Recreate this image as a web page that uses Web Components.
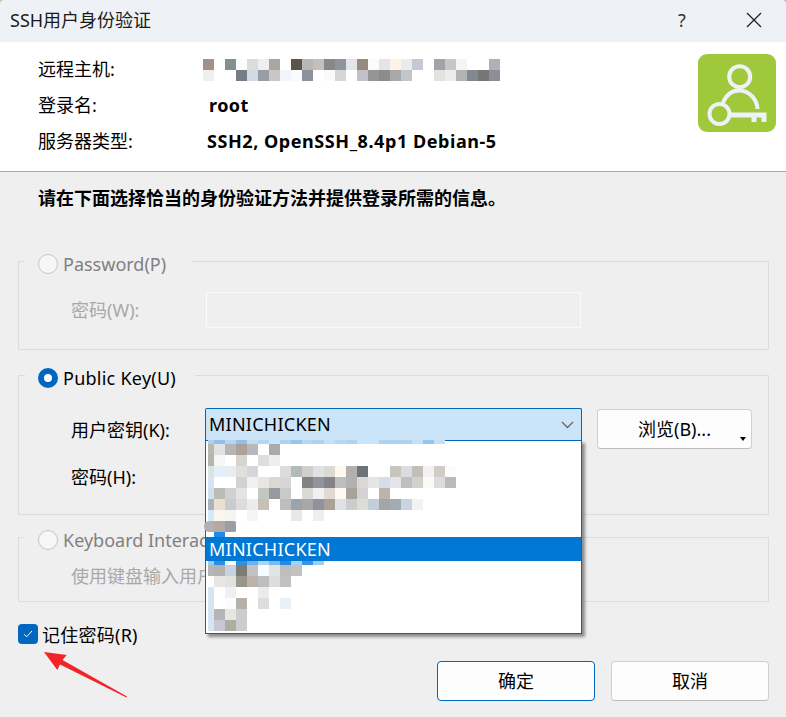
<!DOCTYPE html>
<html lang="zh">
<head>
<meta charset="utf-8">
<title>SSH用户身份验证</title>
<style>
  html, body { margin: 0; padding: 0; background: #efefef; }
  body {
    width: 786px;
    height: 717px;
    overflow: hidden;
    font: 18px/24px "Noto Sans", "Noto Sans CJK SC", sans-serif;
    color: #000;
  }
  b { letter-spacing: .45px; }
</style>
</head>
<body>
<ssh-dialog>
  <title-bar slot="title">SSH用户身份验证</title-bar>
  <info-header slot="header">
    <info-row label="远程主机:">
      <mosaic-grid cell="11" first="11" rows="#a09288,,#848f8f,#fcfcfc,#dcdcdc,#eeeeee,#aba59f,,#5c534b,#b9b6b3,#c4bfba,#888888,#8f939b,#e3e5e8,#948a80,#fafbfc,#e4e5e8,#fdf3e8,#ebebeb,#c5c9d4,,#a0a4a8,#c6c8c8,#f5f5f5,,,#b0b1b8;#efefef,,,#757c86,#d3dae3,#9a9ca6,#c9c6c4,#f3f6f8,#fafbfc,#8c929c,,#fafafa,#d6d6d6,,#c0c1c9,#959595,#8b8c8e,#a8a8a8,#c0c6cc,,,#e2e2e0,#ececee,#b2b4b2,#808890,#767676,#8c9094" style="margin:2px 0 0 -6px"></mosaic-grid>
    </info-row>
    <info-row label="登录名:"><b>root</b></info-row>
    <info-row label="服务器类型:"><b style="margin-left:-2px;letter-spacing:.56px">SSH2, OpenSSH_8.4p1 Debian-5</b></info-row>
  </info-header>
  <prompt-line slot="body">请在下面选择恰当的身份验证方法并提供登录所需的信息。</prompt-line>

  <group-box slot="body" style="--gap-end:26px">
    <radio-option slot="legend" disabled>Password(P)</radio-option>
    <form-row label="密码(W):" disabled style="--row-top:18px;--row-bottom:21px"><text-field></text-field></form-row>
  </group-box>

  <group-box slot="body" style="--gap-end:19px;margin-top:13px">
    <radio-option slot="legend" checked style="letter-spacing:.25px">Public Key(U)</radio-option>
    <form-row label="用户密钥(K):" style="--row-top:20px;--row-h:44px;--label-h:44px">
      <combo-box value="MINICHICKEN">
        <mosaic-grid cell="4" first="6" rows="#b0cfe8,#8fc0ea,#b5d5f0,#8fc0ea,#c5dcec,#b5d5f0,#cce4f7,#aed3f0,#93c5ee,#b8d6f0,#aed3f0,#c5e0f5,#b8d6f0,#aed3f0,#cce4f7,#cce4f7,#aed3f0,#aed3f0,#aed3f0,#c5e0f5,#93c5ee,#c5e0f5"></mosaic-grid>
        <mosaic-grid cell="11" first="6" rows="#b9b9b3,#e2e2e2,#b5b5b5,#aca29a,#b6b9bc,,#aaaaac;#b5b5b0,#f7f6f4,,#d5d5cf,,#dedede,#eeeeee;#d9e5e3,#e4eef8,#e9edf0,#dfdfdc,#d6d6da,,,#dedcda,#b2babc,#cfd0cc,#dfe2e5,#dcd9d2,#fff8ee,#b3afac,#6e7279,,,#c8c4be,#dcdde0,#c2bfbb,#f2f2f2,#d2cbc6,#fcfcff;#d5e4f0,,,#d2d2d2,#f2f0ee,#e8e6e4,#dcd7d0,#d6d6d6,,#828282,#92949c,#82848a,#bdbdc0,#b0b2b0,#d9d8d5,#e5e5e5,#d5dde9,#e2e4e8,#c0bfbc,#d2d1ce,#fcf9f3,#dcdce0,#bababc;#d2e0ee,#bcbcb6,#ced2d4,#e4e4e4,,#c4c6c4,#999aa0,#c9c9c9,,#d8dad8,#f0f0f0,#e2d9d2,#fef8f2,#a6a39a,#d5d2d4,,#b9b5ac;#a8b3bf,#eadfd0,#c8cccb,#dddddd,#eeece9,#c8bfb5,,#bdbdbd,#9ba3ad,#a8a8aa,#92929c,#aaa294,#e0e1e3,#cccccc,#dedcda,#c5ccda,#a2a6a8,#a2aab2,#c8d4e0,#f2f3f5;#d5e8f8,#faf6ee,#f6f5f2,,#f5f5f5,,,,#e8e8e8,,#eeeef0"></mosaic-grid>
        <mosaic-grid cell="11" first="10" class="blob" rows="#b5b0ae,#b5a8a5,#9b9ea2"></mosaic-grid>
        <mosaic-grid cell="5" first="6" rows=",#1f8de8"></mosaic-grid>
        <combo-option selected>MINICHICKEN</combo-option>
        <mosaic-grid cell="4" first="6" rows="#9cc8ee,#2a8fe6,,#3090e0,#70b0ee,#b0d4f4,#7ab8ee,#1f8de8,#a8d0f4,#3a95e8,#a0ccf0"></mosaic-grid>
        <mosaic-grid cell="11" first="6" rows="#b5b5b5,#b2b2b2,#c8d2e0,#7c7c74,#c2c2c4,#f5fcff,#dfe4e4,#bebebe,#c2c2c2;,#e8e6e4,#e4e2df,#97978e,#bcb2aa,#bebebe,#dddddd,#c0c2c0;#d5e5f2,,#eff0f2,,,#ebebeb;#d5e5f2,,#fbfcfd,#b5b0aa,,#dddddd,,#e8f0f8;#d5e5f2,#b5b5b5,#e8e6e4,#cdcdd0;#d5e5f2,#c5c8d2,#adada2,#cccdd0"></mosaic-grid>
      </combo-box>
      <push-button slot="after" menu style="width:155px;margin:1px 0 0 15px">浏览(B)...</push-button>
    </form-row>
    <form-row label="密码(H):" style="--row-top:7px;--row-bottom:19px;--row-h:36px"></form-row>
  </group-box>

  <group-box slot="body" style="--gap-end:40px;margin-top:10px">
    <radio-option slot="legend" disabled>Keyboard Interac</radio-option>
    <form-row label="使用键盘输入用户" disabled style="--row-top:13px;--row-bottom:12px;--row-h:26px;--label-h:26px"></form-row>
  </group-box>

  <check-option slot="body" checked style="margin-top:22px">记住密码(R)</check-option>

  <dialog-footer slot="body">
    <push-button default>确定</push-button>
    <push-button>取消</push-button>
  </dialog-footer>

  <red-arrow slot="overlay"></red-arrow>
</ssh-dialog>

<script>
// every component below is a shadow root with its own <style>
function el(tag, css, html, init) {
  customElements.define(tag, class extends HTMLElement {
    constructor() {
      super();
      this.attachShadow({ mode: 'open' }).innerHTML = `<style>${css}</style>${html}`;
    }
    connectedCallback() {
      if (init) init.call(this);
    }
  });
}

function setLabel() {
  this.shadowRoot.querySelector('.label').textContent = this.getAttribute('label');
}

el('ssh-dialog', `
  :host { display: block; position: relative; width: 786px; height: 717px; overflow: hidden; background: #efefef; }
  .body { padding: 0 17px 0 18px; display: flex; flex-direction: column; }
`, `
  <slot name="title"></slot>
  <slot name="header"></slot>
  <div class="body"><slot name="body"></slot></div>
  <slot name="overlay"></slot>
`);

el('title-bar', `
  :host { display: block; background: #b9b9b9; }
  .bar { display: flex; align-items: center; height: 42px; box-sizing: border-box; padding: 0 0 2px 10px; background: #eef2f7; color: #1a1a1a; border-radius: 4px 4px 0 0; }
  .title { flex: 1; }
  .help { width: 16px; margin-right: 56px; color: #333; text-align: center; font-size: 18px; }
  svg { margin-right: 24px; display: block; }
`, `
  <div class="bar">
    <div class="title"><slot></slot></div>
    <div class="help">?</div>
    <svg width="16" height="16" viewBox="0 0 16 16"><path d="M1 1l14 14M15 1L1 15" stroke="#222" stroke-width="1.3" fill="none"/></svg>
  </div>
`);

el('info-header', `
  :host { display: flex; justify-content: space-between; padding: 9px 10px 0 38px; box-sizing: border-box; height: 130px; background: #fff; border-bottom: 1px solid #a9a9a9; }
  .rows { display: flex; flex-direction: column; }
  svg { margin-top: 3px; display: block; }
`, `
  <div class="rows"><slot></slot></div>
  <svg width="78" height="78" viewBox="0 0 78 78">
    <rect width="78" height="78" rx="9" fill="#9fc83a"/>
    <g fill="none" stroke="#eef2f8" stroke-width="4">
      <circle cx="41.7" cy="22.7" r="10.5"/>
      <path d="M25 49C28 41 33 36.5 41 36.5 51 36.5 59 45 59.5 55"/>
      <circle cx="21.5" cy="60" r="10"/>
    </g>
    <path d="M32 58.5H68.5V68H63.5V63.5H58.5V68H53.5V63.5H32Z" fill="#eef2f8"/>
  </svg>
`);

el('info-row', `
  :host { display: flex; align-items: center; height: 36px; }
  .label { width: 171px; flex: none; }
`, `<div class="label"></div><slot></slot>`, setLabel);

el('prompt-line', `
  :host { display: block; height: 77px; padding: 14px 0 0 20px; box-sizing: border-box; font-weight: 700; }
`, `<slot></slot>`);

el('group-box', `
  :host { display: block; }
  fieldset { margin: 0; padding: 0; min-width: 0; border: 1px solid #dcdcdc; }
  legend { display: block; margin: 0 0 0 6px; padding: 5px var(--gap-end, 20px) 0 13px; height: 25px; box-sizing: border-box; }
  .content { padding-left: 52px; }
`, `
  <fieldset>
    <legend><slot name="legend"></slot></legend>
    <div class="content"><slot></slot></div>
  </fieldset>
`);

el('radio-option', `
  :host { display: flex; align-items: center; gap: 5px; height: 20px; color: #000; white-space: nowrap; }
  :host([disabled]) { color: #808080; }
  i { width: 20px; height: 20px; box-sizing: border-box; border-radius: 50%; border: 1px solid #c6c6c6; background: #f6f6f6; display: block; }
  :host([checked]) i { border: 6px solid #0067c0; background: #fff; }
`, `<i></i><slot></slot>`);

el('form-row', `
  :host { display: flex; padding: var(--row-top, 0) 0 var(--row-bottom, 0) 0; min-height: var(--row-h, 36px); }
  :host([disabled]) { color: #a9a9a9; }
  .label { width: 135px; flex: none; height: var(--label-h, 36px); display: flex; align-items: center; white-space: nowrap; }
`, `<div class="label"></div><slot></slot><slot name="after"></slot>`, setLabel);

el('text-field', `
  :host { display: block; width: 375px; height: 36px; box-sizing: border-box; border: 1px solid #fafafa; }
`, ``);

el('combo-box', `
  :host { display: block; position: relative; width: 377px; height: 33px; margin-left: -1px; box-sizing: border-box; background: #cce4f7; border: 1px solid #0067c0; border-bottom: 0; border-radius: 2px 2px 0 0; }
  .value { padding-left: 3px; line-height: 31px; letter-spacing: .25px; }
  svg { position: absolute; right: 7px; top: 12px; }
  .popup { position: absolute; left: -1px; top: 31px; width: 377px; height: 194px; box-sizing: border-box; z-index: 5; background: #fff; border: 1px solid #0067c0; box-shadow: 3px 3px 3px rgba(0,0,0,.42); }
  .list { margin-top: -1px; }
  ::slotted(mosaic-grid) { margin-left: 2px; }
  ::slotted(.blob) { margin-left: -2px; width: max-content; border-radius: 6px 2px 2px 6px; overflow: hidden; }
`, `
  <div class="value"></div>
  <svg width="13" height="8" viewBox="0 0 13 8"><path d="M1 1l5.5 5.5L12 1" fill="none" stroke="#666" stroke-width="1.3"/></svg>
  <div class="popup"><div class="list"><slot></slot></div></div>
`, function () {
  this.shadowRoot.querySelector('.value').textContent = this.getAttribute('value');
});

el('combo-option', `
  :host { display: block; height: 24px; line-height: 24px; padding-left: 3px; letter-spacing: .25px; }
  :host([selected]) { background: #0078d4; color: #fff; }
`, `<slot></slot>`);

// pixelated censor blocks, colours read off the screenshot; empty cell = background
el('mosaic-grid', `
  :host { display: block; }
  .row { display: flex; }
  .row i { display: block; flex: none; }
`, `<div class="grid"></div>`, function () {
  const h = +this.getAttribute('cell');
  const first = +this.getAttribute('first');
  this.shadowRoot.querySelector('.grid').innerHTML = this.getAttribute('rows').split(';').map(r =>
    '<div class="row">' + r.split(',').map((c, i) =>
      `<i style="width:${i ? 11 : first}px;height:${h}px;background:${c || 'transparent'}"></i>`
    ).join('') + '</div>'
  ).join('');
});

el('check-option', `
  :host { display: flex; align-items: center; gap: 4px; height: 20px; letter-spacing: .25px; }
  i { width: 20px; height: 20px; border-radius: 4px; background: #0067c0; display: flex; align-items: center; justify-content: center; }
  span { padding-top: 2px; }
`, `
  <i><svg width="10" height="8" viewBox="0 0 10 8"><path d="M1 4.2L3.6 6.8 9 1" fill="none" stroke="#fff" stroke-width="1"/></svg></i>
  <span><slot></slot></span>
`);

el('dialog-footer', `
  :host { display: flex; justify-content: flex-end; gap: 16px; margin-top: 17px; }
  ::slotted(push-button) { width: 158px; }
`, `<slot></slot>`);

el('push-button', `
  :host { display: block; position: relative; height: 40px; box-sizing: border-box; background: #fdfdfd; border: 1px solid #d0d0d0; border-bottom-color: #bcbcbc; border-radius: 4px; text-align: center; line-height: 38px; flex: none; }
  :host([default]) { border-color: #0067c0; }
  b { display: none; position: absolute; right: 5px; bottom: 7px; border: 3px solid transparent; border-top: 4px solid #000; border-bottom: 0; }
  :host([menu]) b { display: block; }
`, `<slot></slot><b></b>`);

el('red-arrow', `
  :host { position: absolute; left: 0; top: 0; width: 786px; height: 717px; pointer-events: none; }
  svg { display: block; }
`, `<svg width="786" height="717"><polygon points="44,652 66.7,655 62.5,660 127,696.5 126.5,697.5 60,664.5 57.3,670" fill="#f2242a"/></svg>`);
</script>
</body>
</html>
